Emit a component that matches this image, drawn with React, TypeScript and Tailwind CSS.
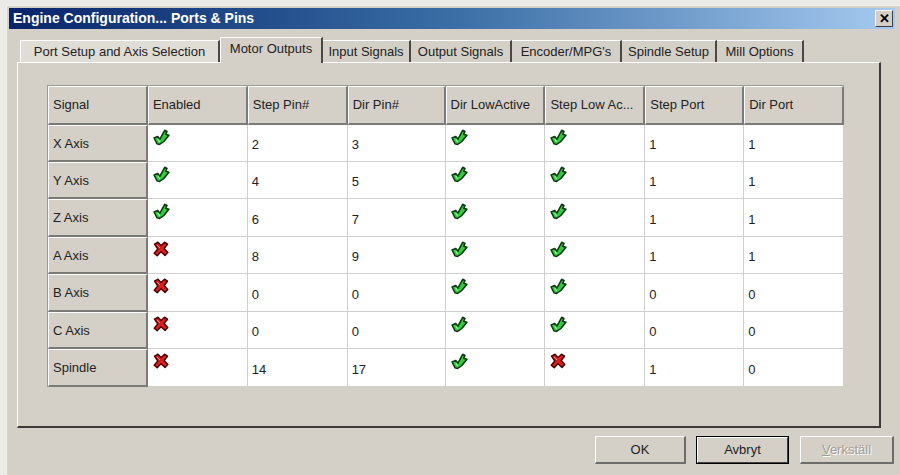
import React from "react"

type Flag = boolean

type Row = {
  signal: string
  enabled: Flag
  stepPin: string
  dirPin: string
  dirLow: Flag
  stepLow: Flag
  stepPort: string
  dirPort: string
}

const rows: Row[] = [
  { signal: "X Axis", enabled: true, stepPin: "2", dirPin: "3", dirLow: true, stepLow: true, stepPort: "1", dirPort: "1" },
  { signal: "Y Axis", enabled: true, stepPin: "4", dirPin: "5", dirLow: true, stepLow: true, stepPort: "1", dirPort: "1" },
  { signal: "Z Axis", enabled: true, stepPin: "6", dirPin: "7", dirLow: true, stepLow: true, stepPort: "1", dirPort: "1" },
  { signal: "A Axis", enabled: false, stepPin: "8", dirPin: "9", dirLow: true, stepLow: true, stepPort: "1", dirPort: "1" },
  { signal: "B Axis", enabled: false, stepPin: "0", dirPin: "0", dirLow: true, stepLow: true, stepPort: "0", dirPort: "0" },
  { signal: "C Axis", enabled: false, stepPin: "0", dirPin: "0", dirLow: true, stepLow: true, stepPort: "0", dirPort: "0" },
  { signal: "Spindle", enabled: false, stepPin: "14", dirPin: "17", dirLow: true, stepLow: false, stepPort: "1", dirPort: "0" },
]

const rowHeights = ["h-[37px]", "h-[37px]", "h-[38px]", "h-[37px]", "h-[38px]", "h-[37px]", "h-[38px]"]

const headers = ["Signal", "Enabled", "Step Pin#", "Dir Pin#", "Dir LowActive", "Step Low Ac...", "Step Port", "Dir Port"]
const colWidths = ["w-[100px]", "w-[100px]", "w-[100px]", "w-[98px]", "w-[100px]", "w-[100px]", "w-[99px]", "w-[100px]"]

const tabs = [
  { label: "Port Setup and Axis Selection", w: "w-[200px]" },
  { label: "Motor Outputs", w: "w-[103px]", active: true },
  { label: "Input Signals", w: "w-[88px]" },
  { label: "Output Signals", w: "w-[101px]" },
  { label: "Encoder/MPG's", w: "w-[110px]" },
  { label: "Spindle Setup", w: "w-[95px]" },
  { label: "Mill Options", w: "w-[87px]" },
]

function Check() {
  return (
    <svg width="17" height="17" viewBox="0 0 16 16">
      <path
        d="M1 8.5 L4.5 7 L6.5 9.5 L11 1.2 L13.2 2.2 L12 5 L15 5.8 L10 12 L6.2 14.5 L3.8 14 Z"
        fill="#34c83e"
        stroke="#0b3410"
        strokeWidth="1.4"
        strokeLinejoin="round"
      />
      <path d="M4.5 9.5 L6.5 12.5" stroke="#9af7a2" strokeWidth="1" />
    </svg>
  )
}

function Cross() {
  return (
    <svg width="16" height="16" viewBox="0 0 16 16">
      <path
        d="M1.5 3 L5 1.2 L8 4.5 L11.5 1.2 L14.5 3.2 L11.2 7.5 L14.8 11.5 L12 14.5 L8 10.8 L4.2 14.8 L1.2 12.2 L4.8 8 Z"
        fill="#d81e1e"
        stroke="#440404"
        strokeWidth="1.4"
        strokeLinejoin="round"
      />
      <path d="M4 4 L7 7" stroke="#ff8a8a" strokeWidth="1" />
    </svg>
  )
}

function FlagCell({ on, w }: { on: Flag; w: string }) {
  return (
    <div className={`${w} h-full bg-white border-r border-b border-[#cfcfcf] pl-[5px] pt-[4px]`}>
      {on ? <Check /> : <Cross />}
    </div>
  )
}

function TextCell({ text, w }: { text: string; w: string }) {
  return (
    <div className={`${w} h-full bg-white border-r border-b border-[#cfcfcf] flex items-center pl-[4px] pt-[4px]`}>
      {text}
    </div>
  )
}

function Button({ label, w, isDefault, disabled }: { label: string; w: string; isDefault?: boolean; disabled?: boolean }) {
  if (isDefault) {
    return (
      <div className={`${w} h-[28px] border border-black`}>
        <div className="w-full h-full border-t border-l border-white border-r border-b border-r-[#404040] border-b-[#404040] flex items-center justify-center bg-[#d4d0c8]">
          {label}
        </div>
      </div>
    )
  }
  return (
    <div className={`${w} h-[28px] border-t border-l border-white border-r-2 border-b-2 border-r-[#6e6c68] border-b-[#6e6c68] flex items-center justify-center bg-[#d4d0c8]`}>
      {disabled ? (
        <span className="text-[#a09d97] [text-shadow:1px_1px_0_#ffffff]">
          <span className="underline">V</span>erkställ
        </span>
      ) : (
        label
      )}
    </div>
  )
}

export default function App() {
  return (
    <div
      className="w-[900px] h-[475px] bg-[#eceae6] pl-[6px] pt-[5px] overflow-hidden text-[#222]"
      style={{ fontFamily: '"Liberation Sans", Arial, sans-serif' }}
    >
      <div className="w-[894px] h-[470px] bg-[#d4d0c8] border-l border-t border-[#f4f2ee] pl-[2px] pt-[2px] flex flex-col">
        {/* title bar */}
        <div className="h-[21px] w-[886px] flex items-center justify-between bg-gradient-to-r from-[#0a246a] via-[#3a6ea5] to-[#a6caf0] pl-[4px] pr-[2px]">
          <span className="text-white font-bold text-[14px]">Engine Configuration... Ports &amp; Pins</span>
          <div className="w-[18px] h-[17px] bg-[#d4d0c8] border-t border-l border-white border-r border-b border-r-[#404040] border-b-[#404040] flex items-center justify-center text-[13px] font-bold leading-none text-black">
            ✕
          </div>
        </div>

        {/* tabs */}
        <div className="flex items-end h-[33px] pl-[11px] text-[13px]">
          {tabs.map((t) =>
            t.active ? (
              <div
                key={t.label}
                className={`${t.w} h-[26px] -mb-px relative z-10 bg-[#d4d0c8] border-t border-l border-white border-r-2 border-r-[#4a4844] flex items-center justify-center pb-[3px]`}
              >
                {t.label}
              </div>
            ) : (
              <div
                key={t.label}
                className={`${t.w} h-[22px] bg-[#d4d0c8] border-t border-white border-r-2 border-r-[#4a4844] flex items-center justify-center ${t.label.startsWith("Port") ? "border-l bg-[#e0ddd7]" : ""}`}
              >
                {t.label}
              </div>
            )
          )}
        </div>

        {/* panel */}
        <div className="ml-[8px] w-[864px] h-[366px] bg-[#d4d0c8] border-t border-l border-white border-r-2 border-b-2 border-r-[#3c3a36] border-b-[#3c3a36] pl-[29px] pt-[22px]">
          <div className="w-[797px] flex flex-col text-[13px] border-t border-l border-[#9a9894]">
            <div className="flex h-[39px]">
              {headers.map((h, i) => (
                <div
                  key={h}
                  className={`${colWidths[i]} h-full bg-[#d4d0c8] border-t border-l border-white border-r-2 border-b-2 border-r-[#7c7a76] border-b-[#7c7a76] flex items-center pl-[4px]`}
                >
                  {h}
                </div>
              ))}
            </div>
            {rows.map((r, ri) => (
              <div key={r.signal} className={`flex ${rowHeights[ri]}`}>
                <div className={`${colWidths[0]} h-full bg-[#d4d0c8] border-t border-l border-white border-r-2 border-b-2 border-r-[#7c7a76] border-b-[#7c7a76] flex items-center pl-[4px] pt-[1px]`}>
                  {r.signal}
                </div>
                <FlagCell on={r.enabled} w={colWidths[1]} />
                <TextCell text={r.stepPin} w={colWidths[2]} />
                <TextCell text={r.dirPin} w={colWidths[3]} />
                <FlagCell on={r.dirLow} w={colWidths[4]} />
                <FlagCell on={r.stepLow} w={colWidths[5]} />
                <TextCell text={r.stepPort} w={colWidths[6]} />
                <TextCell text={r.dirPort} w={colWidths[7]} />
              </div>
            ))}
          </div>
        </div>

        {/* buttons */}
        <div className="flex justify-end pr-[6px] pt-[8px] text-[13px]">
          <Button label="OK" w="w-[91px]" />
          <div className="w-[10px]" />
          <Button label="Avbryt" w="w-[93px]" isDefault />
          <div className="w-[11px]" />
          <Button label="Verkställ" w="w-[94px]" disabled />
        </div>
      </div>
    </div>
  )
}
